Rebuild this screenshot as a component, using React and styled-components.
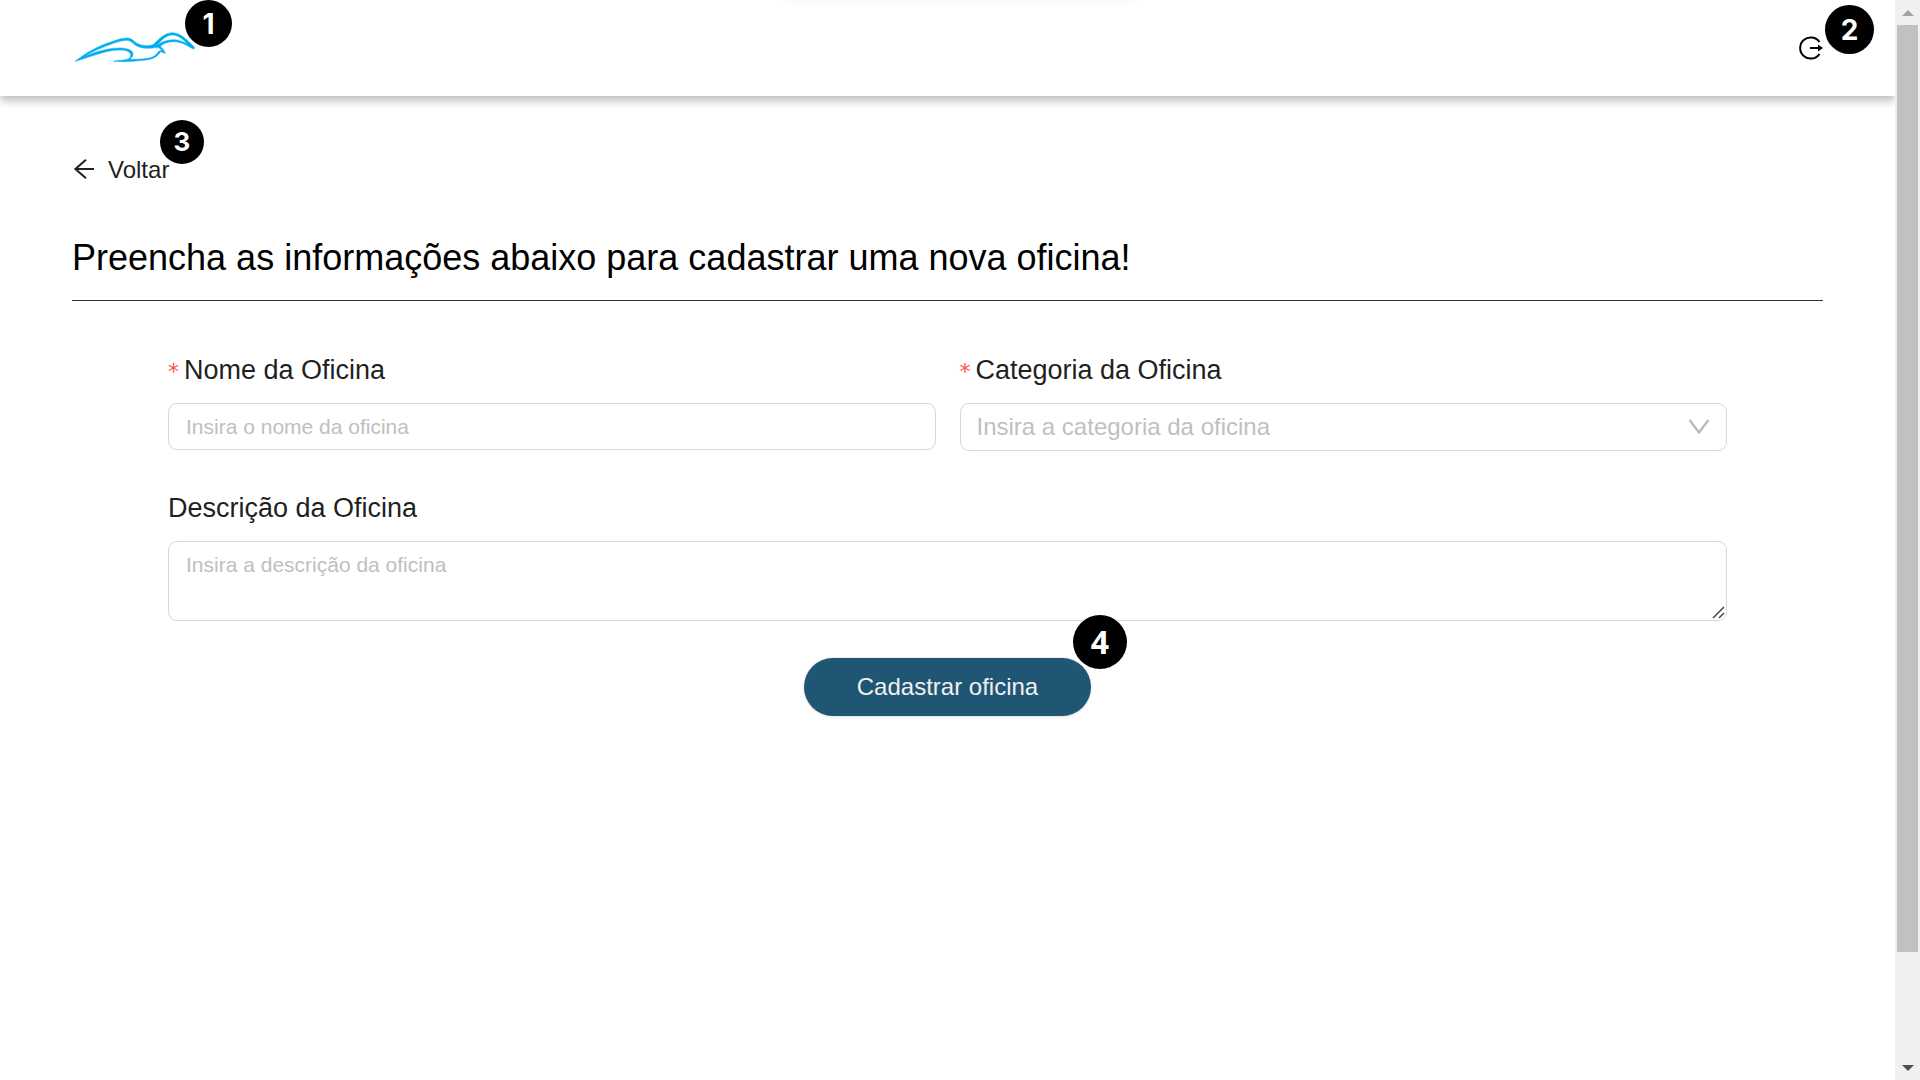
import React from "react";
import styled, { createGlobalStyle } from "styled-components";

const GlobalStyle = createGlobalStyle`
  *, *::before, *::after { box-sizing: border-box; }
  body {
    margin: 0;
    background: #fff;
    color: #1f1f1f;
    font-family: "Liberation Sans", Arial, sans-serif;
    font-size: 24px;
    overflow: hidden;
  }
`;

const Shell = styled.div`
  display: flex;
  height: 100vh;
`;

const Page = styled.div`
  flex: 1;
  min-width: 0;
  overflow: hidden;
`;

const Header = styled.header`
  position: relative;
  display: flex;
  align-items: center;
  justify-content: space-between;
  height: 96px;
  padding: 0 72px;
  background: #fff;
  box-shadow: 0 5px 8px rgba(0, 0, 0, 0.25);

  &::before {
    content: "";
    position: absolute;
    top: -20px;
    left: calc(50% - 160px);
    width: 344px;
    height: 20px;
    box-shadow: 0 0 12px rgba(0, 0, 0, 0.05);
  }
`;

const LogoLink = styled.a`
  position: relative;
  display: flex;
`;

const IconButton = styled.button`
  position: relative;
  display: flex;
  padding: 0;
  border: 0;
  background: none;
  color: #000;
  cursor: pointer;
`;

const Badge = styled.span`
  position: absolute;
  top: ${(p) => p.$top}px;
  left: ${(p) => p.$left}px;
  display: flex;
  align-items: center;
  justify-content: center;
  width: ${(p) => p.$size}px;
  height: ${(p) => p.$size}px;
  border-radius: 50%;
  background: #000;
  color: #fff;
  font: 700 ${(p) => p.$font}px/1 ${(p) => p.$family || "Inter"}, sans-serif;
`;

const Main = styled.main`
  padding: 56px 72px 0;
`;

const BackButton = styled.button`
  position: relative;
  display: flex;
  align-items: center;
  gap: 12px;
  height: 36px;
  padding: 0;
  border: 0;
  background: none;
  color: #1f1f1f;
  font: inherit;
  cursor: pointer;
`;

const Title = styled.h1`
  margin: 48px 0 48px;
  padding-bottom: 20px;
  border-bottom: 1px solid #303030;
  color: #000;
  font-size: 36px;
  font-weight: 400;
  line-height: 44px;
`;

const Form = styled.form`
  display: flex;
  flex-direction: column;
  gap: 36px;
  padding: 0 96px;
`;

const Row = styled.div`
  display: grid;
  grid-template-columns: 1fr 1fr;
  align-items: start;
  gap: 24px;
`;

const Field = styled.div`
  display: flex;
  flex-direction: column;
  gap: 12px;
`;

const Label = styled.label`
  display: flex;
  align-items: center;
  gap: 5px;
  font-size: 27px;
  line-height: 42px;
`;

const Required = styled.span`
  padding-top: 4px;
  color: #ff4d4f;
  font: 400 22px/30px "DejaVu Sans", sans-serif;
`;

const Control = styled.div`
  position: relative;
  display: flex;
`;

const fieldStyle = `
  width: 100%;
  margin: 0;
  border: 1px solid #d9d9d9;
  border-radius: 9px;
  background: #fff;
  color: #1f1f1f;
  font-family: inherit;
  outline: none;
  &::placeholder { color: #bfbfbf; opacity: 1; }
  &:focus { border-color: #1f5673; }
`;

const Input = styled.input`
  ${fieldStyle}
  height: 47px;
  padding: 0 17px;
  font-size: 21px;
`;

const Select = styled.select`
  ${fieldStyle}
  appearance: none;
  height: 48px;
  padding: 0 48px 2px 16px;
  color: #bfbfbf;
  font-size: 24px;
`;

const TextArea = styled.textarea`
  ${fieldStyle}
  height: 80px;
  padding: 7px 17px;
  font-size: 21px;
  line-height: 32px;
  resize: vertical;
  &::-webkit-resizer { display: none; }
`;

const Chevron = styled.svg`
  position: absolute;
  top: 16px;
  right: 17px;
  pointer-events: none;
`;

const Grip = styled.svg`
  position: absolute;
  right: 2px;
  bottom: 2px;
  pointer-events: none;
`;

const SubmitButton = styled.button`
  position: relative;
  align-self: center;
  height: 58px;
  margin-top: 1px;
  padding: 0 53px;
  border: 0;
  border-radius: 29px;
  background: #1f5673;
  box-shadow: 0 0 2px rgba(0, 0, 0, 0.25), 0 3px 0 rgba(0, 0, 0, 0.02);
  color: #f0f0f0;
  font: inherit;
  cursor: pointer;
`;

const ScrollBar = styled.div`
  display: flex;
  flex-direction: column;
  width: 25px;
  padding: 0 2px;
  background: #f0f0f0;
`;

const ScrollArrow = styled.button`
  display: flex;
  align-items: center;
  justify-content: center;
  height: 25px;
  padding: 0;
  border: 0;
  background: none;
`;

const Track = styled.div`
  flex: 1;
`;

const Thumb = styled.div`
  height: 90%;
  background: #c1c1c1;
`;

function BirdLogo() {
  return (
    <svg width="124" height="40" viewBox="36 84 372 120" fill="#00aeef" stroke="#00aeef" strokeWidth="1.5" aria-hidden="true">
      <path d="M45 184 C78 158 118 136 155 125 C177 117 190 114 203 114 C218 115 224 128 237 133 C250 138 266 138 279 134 C298 117 312 99 337 98 C363 99 385 123 403 141 L402 148 C389 142 378 134 367 130 C350 123 329 124 315 130 C307 133 303 137 301 140 C310 145 311 152 317 160 C310 159 306 155 302 155 C291 171 277 179 250 181 C216 185 189 186 160 184 C177 179 194 182 207 176 C219 165 208 153 193 151 C164 148 137 155 112 163 C89 170 65 179 45 184 Z M74 169 C112 153 148 144 181 144 C208 145 220 153 219 164 C218 171 213 175 209 178 C238 178 263 177 277 171 C287 166 292 161 296 154 L305 151 C302 147 298 144 292 142 C276 145 253 147 237 141 C220 135 216 123 203 121 C189 121 176 125 160 130 C128 142 99 153 74 169 Z M291 136 C305 125 319 120 341 119 C354 119 368 124 383 132 C366 114 351 105 337 105 C319 105 304 121 291 136 Z" fillRule="evenodd" />
      <circle cx="290" cy="147" r="2" fill="#b9a6ee" stroke="none" />
    </svg>
  );
}

function LogoutIcon() {
  return (
    <svg width="24" height="24" viewBox="0 0 24 24" fill="none" stroke="currentColor" strokeWidth="2" aria-hidden="true">
      <path d="M20.5 6 A10.6 10.6 0 1 0 20.5 18" />
      <path d="M11 12 H20" />
      <path d="M19 8.5 L24 12 L19 15.5 Z" fill="currentColor" stroke="none" />
    </svg>
  );
}

function ArrowLeft() {
  return (
    <svg width="24" height="24" viewBox="0 0 24 24" fill="none" stroke="currentColor" strokeWidth="2" aria-hidden="true">
      <path d="M22 11 H3.5 M14 1.8 L3.4 11 L14 20.2" />
    </svg>
  );
}

export default function App() {
  return (
    <>
      <GlobalStyle />
      <Shell>
        <Page>
          <Header>
            <LogoLink href="#" aria-label="Início">
              <BirdLogo />
              <Badge $top={-28} $left={113} $size={47} $font={28}>1</Badge>
            </LogoLink>
            <IconButton type="button" aria-label="Sair">
              <LogoutIcon />
              <Badge $top={-31} $left={26} $size={49} $font={28}>2</Badge>
            </IconButton>
          </Header>
          <Main>
            <BackButton type="button">
              <ArrowLeft />
              Voltar
              <Badge $top={-32} $left={88} $size={44} $font={26}>3</Badge>
            </BackButton>
            <Title>Preencha as informações abaixo para cadastrar uma nova oficina!</Title>
            <Form onSubmit={(e) => e.preventDefault()}>
              <Row>
                <Field>
                  <Label htmlFor="nome"><Required>*</Required>Nome da Oficina</Label>
                  <Input id="nome" placeholder="Insira o nome da oficina" />
                </Field>
                <Field>
                  <Label htmlFor="categoria"><Required>*</Required>Categoria da Oficina</Label>
                  <Control>
                    <Select id="categoria" defaultValue="">
                      <option value="" disabled>Insira a categoria da oficina</option>
                    </Select>
                    <Chevron width="22" height="16" viewBox="0 0 22 16" fill="none" stroke="#b8b8b8" strokeWidth="2.2">
                      <path d="M1.5 1 L11 13.5 L20.5 1" />
                    </Chevron>
                  </Control>
                </Field>
              </Row>
              <Field>
                <Label htmlFor="descricao">Descrição da Oficina</Label>
                <Control>
                  <TextArea id="descricao" placeholder="Insira a descrição da oficina" />
                  <Grip width="13" height="13" viewBox="0 0 13 13" stroke="#505050" strokeWidth="1.6">
                    <path d="M1 12 L12 1 M7 12 L12 7" />
                  </Grip>
                </Control>
              </Field>
              <SubmitButton type="submit">
                Cadastrar oficina
                <Badge $top={-43} $left={269} $size={54} $font={32} $family={'"Noto Sans"'}>4</Badge>
              </SubmitButton>
            </Form>
          </Main>
        </Page>
        <ScrollBar>
          <ScrollArrow type="button" aria-label="Rolar para cima">
            <svg width="12" height="6" viewBox="0 0 12 6" fill="#a3a3a3"><path d="M0 6 L6 0 L12 6 Z" /></svg>
          </ScrollArrow>
          <Track><Thumb /></Track>
          <ScrollArrow type="button" aria-label="Rolar para baixo">
            <svg width="12" height="6" viewBox="0 0 12 6" fill="#505050"><path d="M0 0 L6 6 L12 0 Z" /></svg>
          </ScrollArrow>
        </ScrollBar>
      </Shell>
    </>
  );
}
